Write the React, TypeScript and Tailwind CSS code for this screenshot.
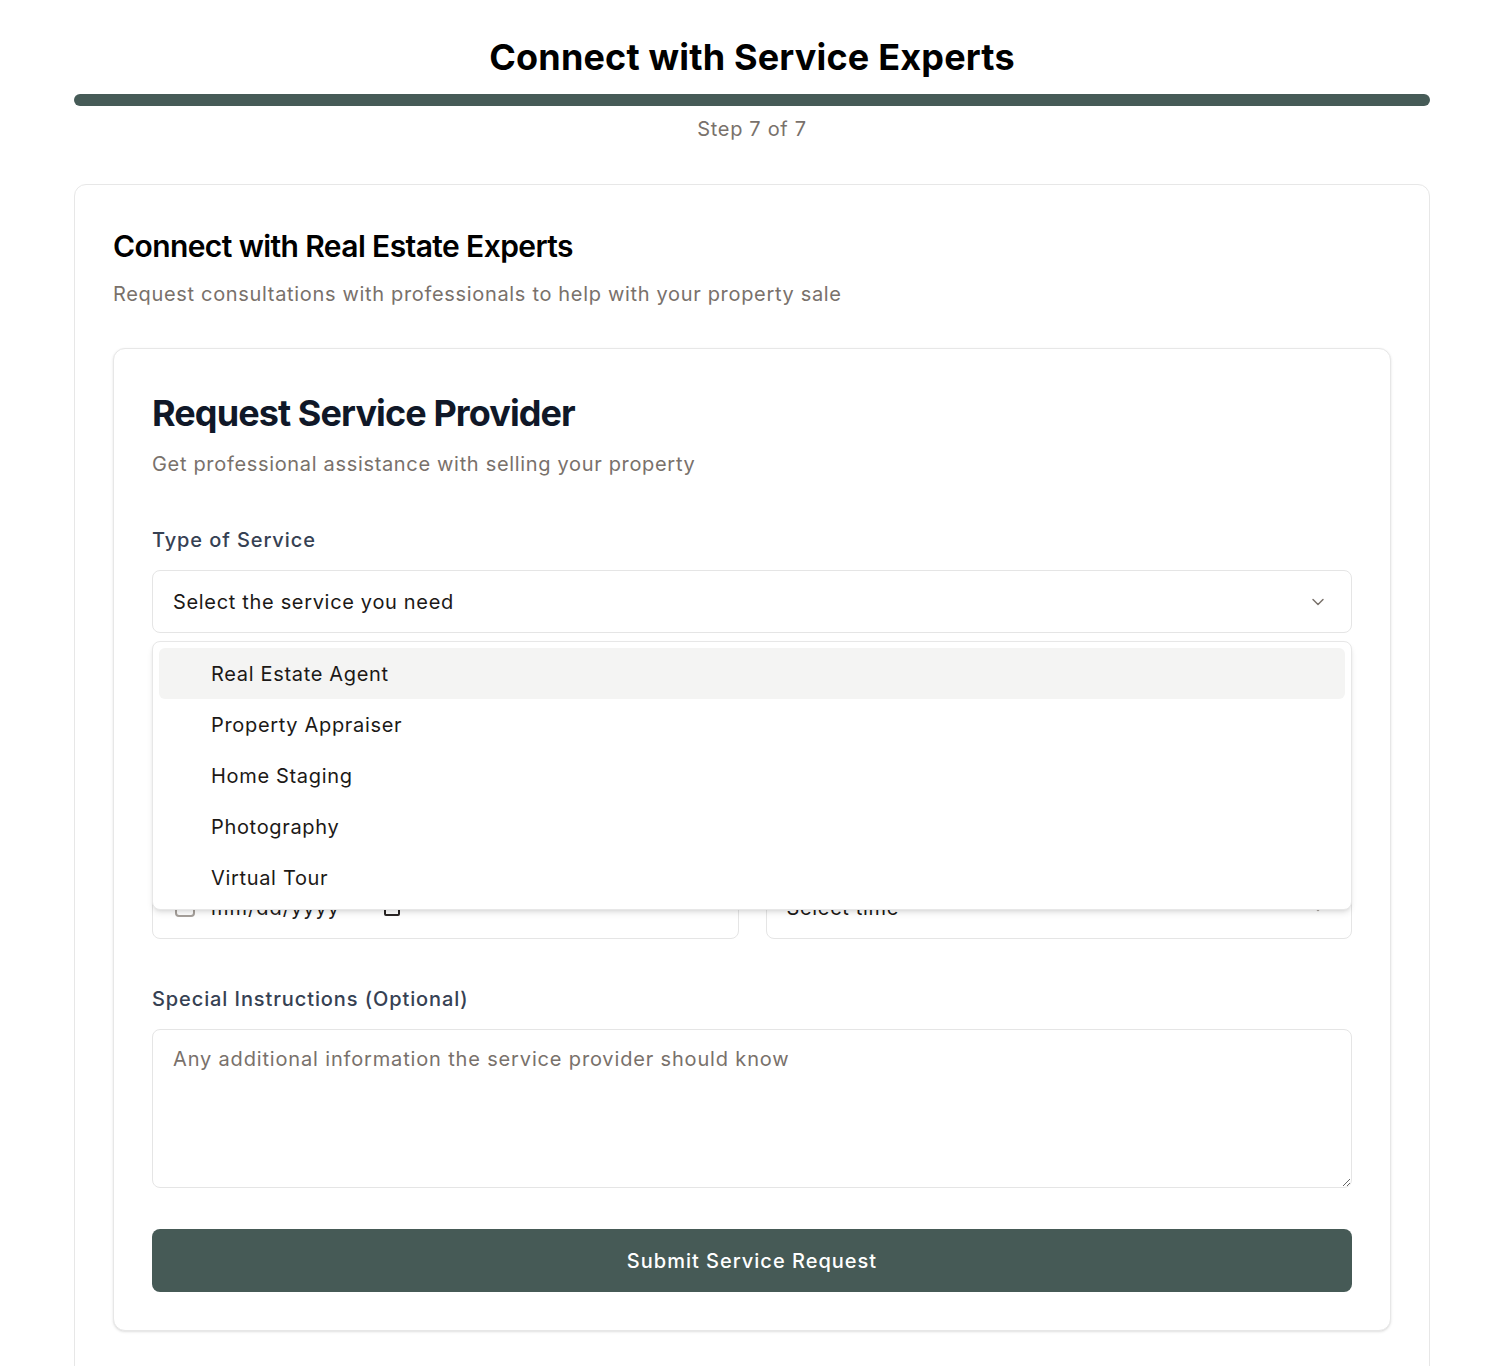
import { ChevronDown } from "lucide-react";

// Service request step — dropdown shown open over the form.

const SERVICES = [
  "Real Estate Agent",
  "Property Appraiser",
  "Home Staging",
  "Photography",
  "Virtual Tour",
];

const labelCls = "block text-xl font-medium leading-7 tracking-[0.045em] text-gray-700";
const fieldCls =
  "flex h-[63px] w-full items-center rounded-lg border border-[#e5e5e5] bg-white px-5 text-xl text-stone-900";

export default function App() {
  return (
    <div
      className="min-h-[1366px] bg-white pl-[74px] pr-[58px] pt-[37px] tracking-[0.042em]"
      style={{ fontFamily: "Inter, 'Noto Sans', sans-serif" }}
    >
      {/* Header + progress */}
      <h1 className="text-center text-4xl font-bold leading-10 tracking-[0.005em] text-black">
        Connect with Service Experts
      </h1>
      <div className="mt-[17px] h-3 w-full rounded-full bg-[#465b57]" />
      <p className="mt-[9px] text-center text-xl leading-7 text-stone-500">Step 7 of 7</p>

      {/* Outer card */}
      <div className="mt-[41px] h-[1200px] rounded-xl border border-[#e7e7e7] bg-white px-[38px] pt-[43px]">
        <h2 className="text-3xl font-semibold leading-9 tracking-[-0.02em] text-black">
          Connect with Real Estate Experts
        </h2>
        <p className="mt-4 text-xl leading-7 text-stone-500">
          Request consultations with professionals to help with your property sale
        </p>

        {/* Inner card */}
        <div className="mt-10 rounded-xl border border-[#e7e7e7] bg-white px-[38px] pb-[38px] pt-[44px] shadow-sm">
          <h3 className="text-4xl font-bold leading-10 tracking-tight text-gray-900">
            Request Service Provider
          </h3>
          <p className="mt-[17px] text-xl leading-7 text-stone-500">
            Get professional assistance with selling your property
          </p>

          <div className="mt-12 flex flex-col gap-[46px]">
            {/* Type of service */}
            <div className="relative">
              <label className={labelCls}>Type of Service</label>
              <div className={`mt-4 justify-between ${fieldCls}`}>
                <span>Select the service you need</span>
                <ChevronDown className="mr-[3px] h-5 w-5 text-stone-500" strokeWidth={1.75} />
              </div>

              {/* Open dropdown */}
              <div className="absolute left-0 right-0 top-[115px] z-10 rounded-lg border border-[#e7e7e7] bg-white p-1.5 shadow-md">
                {SERVICES.map((s, i) => (
                  <div
                    key={s}
                    className={`flex h-[51px] items-center rounded-md pl-[52px] text-xl text-stone-900 ${
                      i === 0 ? "bg-[#f4f4f3]" : ""
                    }`}
                  >
                    {s}
                  </div>
                ))}
              </div>
            </div>

            {/* Covered by the open dropdown */}
            <div className="invisible">
              <label className={labelCls}>Preferred Contact Method</label>
              <div className={`mt-4 justify-between ${fieldCls}`}>
                <span>Select contact method</span>
                <ChevronDown className="h-5 w-5 text-stone-400" strokeWidth={1.75} />
              </div>
            </div>

            {/* Date / time */}
            <div className="grid grid-cols-2 gap-[27px]">
              <div>
                <label className={`invisible ${labelCls}`}>Preferred Date</label>
                <div className={`mt-4 gap-4 ${fieldCls}`}>
                  <span className="ml-[2px] h-[18px] w-[20px] rounded-[4px] border-2 border-stone-400" />
                  <span className="tracking-wider">mm/dd/yyyy</span>
                  <span className="ml-7 h-[16px] w-[16px] rounded-[2px] border-2 border-stone-800" />
                </div>
              </div>
              <div>
                <label className={`invisible ${labelCls}`}>Preferred Time</label>
                <div className={`mt-4 justify-between ${fieldCls}`}>
                  <span>Select time</span>
                  <ChevronDown className="mr-[3px] h-5 w-5 text-stone-400" strokeWidth={1.75} />
                </div>
              </div>
            </div>

            {/* Special instructions */}
            <div>
              <label className={labelCls}>Special Instructions (Optional)</label>
              <textarea
                className="mt-4 block h-[159px] w-full rounded-lg border border-[#e5e5e5] bg-white px-5 py-[15px] text-xl leading-7 tracking-[0.042em] text-stone-900 placeholder:text-stone-500 focus:outline-none"
                placeholder="Any additional information the service provider should know"
              />
            </div>
          </div>

          <button
            type="button"
            className="mt-[41px] flex h-[63px] w-full items-center justify-center rounded-lg bg-[#465a56] text-xl font-medium tracking-[0.05em] text-white"
          >
            Submit Service Request
          </button>
        </div>
      </div>
    </div>
  );
}
